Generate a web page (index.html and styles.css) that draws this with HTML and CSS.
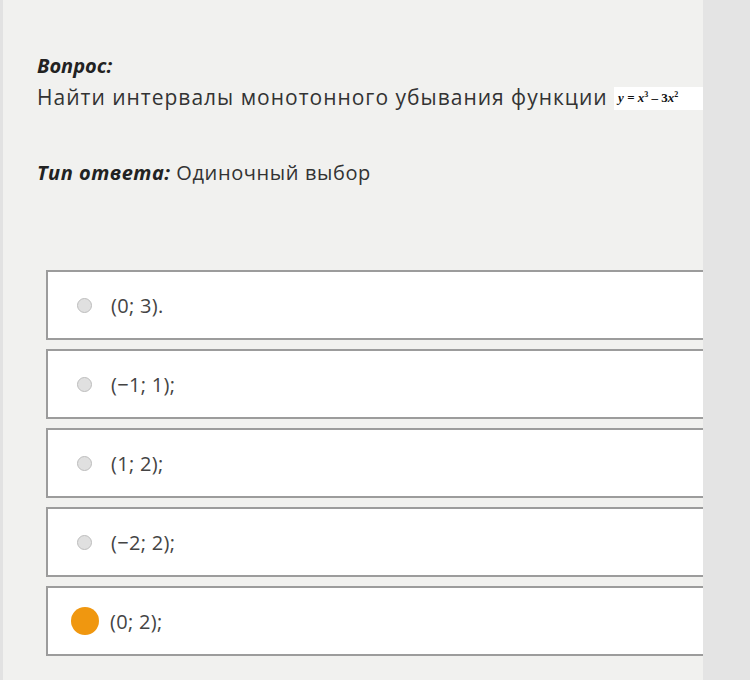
FILE: index.html
```html
<!doctype html>
<html>

<head>
  <title>Вопрос</title>
  <link rel="stylesheet" href="styles.css">
</head>

<body>
  <div class="page">
    <div class="edge"></div>
    <div class="panel">
      <div class="label">Вопрос:</div>
      <div class="question">Найти интервалы монотонного убывания функции <span class="formula"><i>y</i> = <i>x</i><sup>3</sup> – 3<i>x</i><sup>2</sup></span></div>

      <div class="answer-type"><span class="label">Тип ответа:</span> Одиночный выбор</div>

      <div class="options">
        <div class="option"><span class="radio"></span>(0; 3).</div>
        <div class="option"><span class="radio"></span>(−1; 1);</div>
        <div class="option"><span class="radio"></span>(1; 2);</div>
        <div class="option"><span class="radio"></span>(−2; 2);</div>
        <div class="option"><span class="radio checked"></span>(0; 2);</div>
      </div>
    </div>
  </div>
</body>

</html>
```

FILE: styles.css
```css
html, body{
  margin:0;
  height:100%;
}
body{
  background:#e4e4e4;
  font-family:"Open Sans", sans-serif;
  color:#333;
}
.page{
  display:flex;
  height:680px;
}
.edge{
  width:3px;
  background:#e2e2e2;
}
.panel{
  width:700px;
  background:#f1f1ef;
  padding:52px 0 0 34px;
  box-sizing:border-box;
  overflow:hidden;
}
.label{
  font-weight:bold;
  font-style:italic;
  color:#222;
  font-size:20px;
}
.question{
  font-size:21px;
  letter-spacing:1px;
  margin-top:4px;
  white-space:nowrap;
}
.formula{
  display:inline-block;
  background:#fff;
  font-family:"Liberation Serif", serif;
  font-weight:bold;
  font-size:13px;
  letter-spacing:0;
  color:#111;
  padding:3px 40px 4px 4px;
  margin-left:0;
  vertical-align:3px;
}
.formula sup{
  font-size:8px;
}
.answer-type{
  font-size:20px;
  letter-spacing:0.6px;
  margin-top:48px;
}
.answer-type .label{
  letter-spacing:0.5px;
}
.options{
  margin:84px 0 0 9px;
  width:680px;
  display:flex;
  flex-direction:column;
  gap:9px;
}
.option{
  height:66px;
  background:#fff;
  border:2px solid #9c9c9c;
  display:flex;
  align-items:center;
  font-size:20px;
  letter-spacing:0.3px;
  color:#444;
}
.radio{
  width:13px;
  height:13px;
  border-radius:50%;
  background:#e0e0e0;
  border:1px solid #bdbdbd;
  margin:0 19px 0 29px;
  flex:none;
}
.radio.checked{
  width:28px;
  height:28px;
  border:none;
  background:#f0970f;
  margin:0 11px 0 23px;
}
```
